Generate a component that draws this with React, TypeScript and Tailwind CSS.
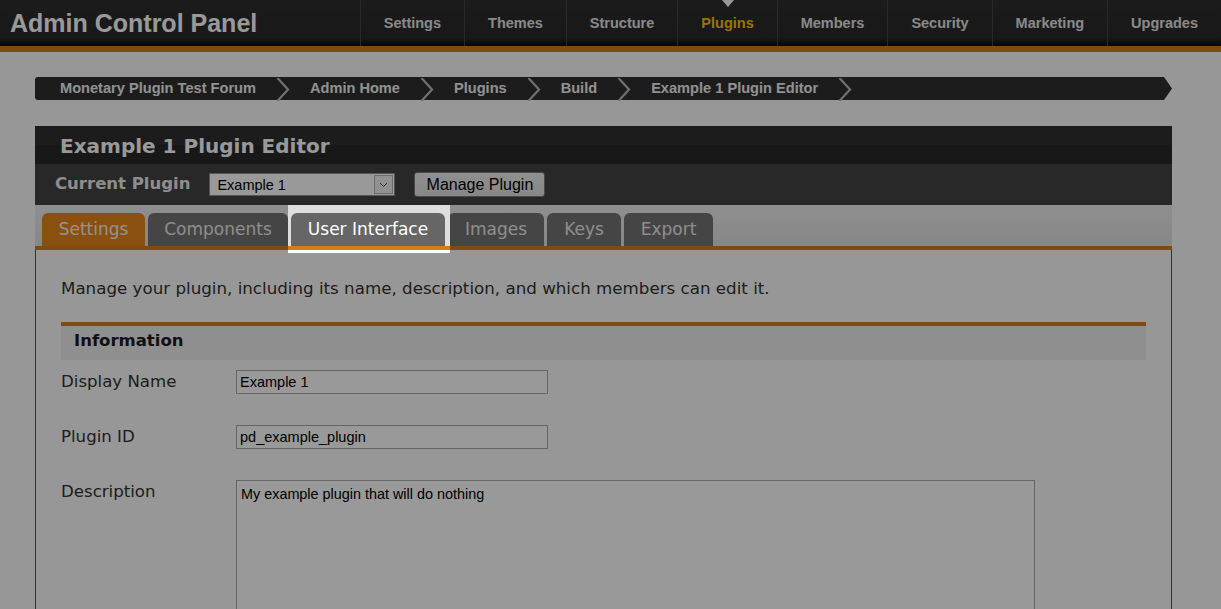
import { Fragment } from 'react';
import clsx from 'clsx';

// 顶部导航
const navItems = ['Settings', 'Themes', 'Structure', 'Plugins', 'Members', 'Security', 'Marketing', 'Upgrades'];

const crumbs = ['Monetary Plugin Test Forum', 'Admin Home', 'Plugins', 'Build', 'Example 1 Plugin Editor'];

// 选项卡宽度按截图取值
const tabs = [
  { label: 'Settings', width: 'w-[103px]' },
  { label: 'Components', width: 'w-[140px]' },
  { label: 'User Interface', width: 'w-[154px]' },
  { label: 'Images', width: 'w-[96px]' },
  { label: 'Keys', width: 'w-[74px]' },
  { label: 'Export', width: 'w-[89px]' },
];

function Header() {
  return (
    <header>
      <div className="flex h-[46px] bg-[linear-gradient(to_bottom,#2e2e2e_0%,#292929_82%,#0c0c0c_100%)]">
        <h1 className="self-center pl-[10px] text-[25px] font-bold leading-none text-white">Admin Control Panel</h1>
        <nav className="ml-auto flex">
          {navItems.map((item) => {
            const active = item === 'Plugins';
            return (
              <a
                key={item}
                className={clsx(
                  'relative flex items-center border-l border-[#474747] px-[23px] pt-[1px] text-[14.5px] font-bold',
                  active ? 'text-[#ffc20e]' : 'text-[#e4e4e4]'
                )}
              >
                {active && (
                  <span className="absolute left-1/2 top-0 -translate-x-1/2 border-x-[6px] border-t-[7px] border-x-transparent border-t-white" />
                )}
                {item}
              </a>
            );
          })}
        </nav>
      </div>
      <div className="h-[6px] bg-[#d47f19]" />
    </header>
  );
}

function Chevron() {
  return (
    <svg width="14" height="23" viewBox="0 0 14 23" className="mx-[20px] shrink-0">
      <polyline points="1.5,0 12,11.5 1.5,23" fill="none" stroke="#bcbcbc" strokeWidth="2.2" />
    </svg>
  );
}

function Breadcrumbs() {
  return (
    <div className="mt-[25px] flex pl-[35px] pr-[49px]">
      <div className="flex h-[23px] flex-1 items-center rounded-l-[3px] bg-[#2f2f2f] pl-[25px] pt-[1px]">
        {crumbs.map((c) => (
          <Fragment key={c}>
            <span className="whitespace-nowrap text-[14.6px] font-bold text-[#f2f2f2]">{c}</span>
            <Chevron />
          </Fragment>
        ))}
      </div>
      <svg width="8" height="23" viewBox="0 0 8 23" className="shrink-0">
        <polygon points="0,0 8,11.5 0,23" fill="#2f2f2f" />
      </svg>
    </div>
  );
}

function Tab({ label, width }: { label: string; width: string }) {
  const active = label === 'Settings';
  const spotlight = label === 'User Interface';

  const tab = (
    <div
      className={clsx(
        'relative flex h-[33px] items-center justify-center rounded-t-[6px] text-[17px] leading-none',
        width,
        active && 'bg-[#e6861b] text-[#f4f4f4]',
        spotlight && 'bg-[#666666] text-white',
        !active && !spotlight && 'bg-[#737373] text-[#ececec]'
      )}
    >
      {label}
    </div>
  );

  if (!spotlight) return tab;

  // 引导提示高亮：其余页面被遮罩压暗
  return (
    <div className="relative z-50">
      <div className="absolute -bottom-[7px] -left-[3px] -right-[5px] -top-[8px] flex flex-col justify-end bg-[#dedede] shadow-[0_0_0_9999px_rgba(0,0,0,0.4)]">
        <div className="h-[4px] bg-[#d27f1a]" />
        <div className="h-[3px] bg-white" />
      </div>
      {tab}
    </div>
  );
}

function Panel() {
  return (
    <div className="ml-[35px] mr-[49px] mt-[26px] font-['DejaVu_Sans',Verdana,sans-serif]">
      {/* 标题 */}
      <div className="flex h-[38px] items-center bg-[linear-gradient(to_bottom,#2f2f2f_50%,#282828_50%)] pl-[25px] pt-[2px]">
        <h2 className="text-[20px] font-bold text-white">Example 1 Plugin Editor</h2>
      </div>

      {/* 当前插件 */}
      <div className="flex h-[41px] items-center bg-[#444444] pl-[20px]">
        <span className="text-[16.5px] font-bold text-[#ededed]">Current Plugin</span>
        <div className="ml-[19px] flex h-[23px] w-[186px] items-center border border-[#8e8e8e] bg-white font-['Liberation_Sans',Arial,sans-serif]">
          <span className="flex-1 pl-[7px] pt-[2px] text-[14.5px] text-black">Example 1</span>
          <span className="mr-[1px] flex h-[19px] w-[19px] items-center justify-center border border-[#b5b5b5] bg-[#f2f2f2]">
            <svg width="9" height="6" viewBox="0 0 9 6">
              <polyline points="1,1 4.5,4.5 8,1" fill="none" stroke="#555" strokeWidth="1" />
            </svg>
          </span>
        </div>
        <button className="ml-[19px] h-[25px] w-[131px] rounded-[3px] border border-[#7b7b7b] bg-[linear-gradient(to_bottom,#efefef,#e2e2e2)] font-['Liberation_Sans',Arial,sans-serif] text-[16px] text-black">
          Manage Plugin
        </button>
      </div>

      {/* 选项卡 */}
      <div className="flex items-end gap-[3px] border-b-4 border-[#d47f19] bg-[linear-gradient(to_bottom,#eeeeee,#e1e1e1)] pl-[7px] pt-[8px]">
        {tabs.map((t) => (
          <Tab key={t.label} label={t.label} width={t.width} />
        ))}
      </div>

      {/* 内容 */}
      <div className="border-x border-[#555555] bg-[#fcfcfc] px-[25px] pb-[40px] pt-[28px] text-[#333333]">
        <p className="whitespace-nowrap text-[16.7px] leading-[21px]">
          Manage your plugin, including its name, description, and which members can edit it.
        </p>

        <div className="mt-[23px] flex h-[38px] items-center border-t-4 border-[#d47f19] bg-[#eeeeee] pb-[4px] pl-[13px]">
          <span className="text-[16.5px] font-bold text-[#1c1c1c]">Information</span>
        </div>

        <div className="mt-[10px] grid grid-cols-[175px_1fr] gap-y-[31px] text-[16.6px] leading-[24px]">
          <label>Display Name</label>
          <div className="flex h-[24px] w-[312px] items-center border border-[#a9a9a9] bg-white pl-[3px] font-['Liberation_Sans',Arial,sans-serif] text-[14.5px] text-black">
            Example 1
          </div>

          <label>Plugin ID</label>
          <div className="flex h-[24px] w-[312px] items-center border border-[#a9a9a9] bg-white pl-[3px] font-['Liberation_Sans',Arial,sans-serif] text-[14.5px] text-black">
            pd_example_plugin
          </div>

          <label>Description</label>
          <div className="h-[170px] w-[799px] border border-[#a9a9a9] bg-white px-[4px] pt-[4px] font-['Liberation_Sans',Arial,sans-serif] text-[14.4px] leading-[18px] text-black">
            My example plugin that will do nothing
          </div>
        </div>
      </div>
    </div>
  );
}

export default function App() {
  return (
    <div className="min-h-[609px] bg-[#fcfcfc] font-['Liberation_Sans',Arial,sans-serif]">
      <Header />
      <Breadcrumbs />
      <Panel />
    </div>
  );
}
